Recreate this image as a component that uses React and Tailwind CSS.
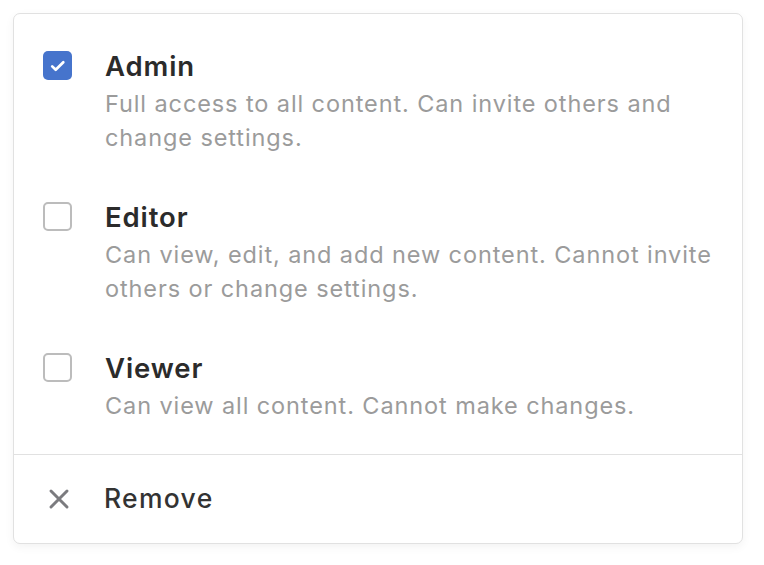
import React from "react";

const roles = [
  {
    name: "Admin",
    desc: "Full access to all content. Can invite others and change settings.",
    checked: true,
  },
  {
    name: "Editor",
    desc: "Can view, edit, and add new content. Cannot invite others or change settings.",
    checked: false,
  },
  {
    name: "Viewer",
    desc: "Can view all content. Cannot make changes.",
    checked: false,
  },
];

function Box({ checked }) {
  if (checked) {
    return (
      <div className="w-[29px] h-[29px] rounded-[5px] bg-[#4674cc] flex items-center justify-center shrink-0">
        <svg width="18" height="18" viewBox="0 0 18 18" fill="none">
          <path d="M3.2 9.4l3.5 3.4 7.6-7.6" stroke="white" strokeWidth="2.7" strokeLinecap="round" strokeLinejoin="round" />
        </svg>
      </div>
    );
  }
  return <div className="w-[29px] h-[29px] rounded-[5px] border-2 border-[#bcbcbc] bg-white shrink-0" />;
}

export default function App() {
  return (
    <div className="w-[764px] h-[565px] bg-white p-[13px]" style={{ fontFamily: "Inter, 'Noto Sans', sans-serif" }}>
      <div className="w-[730px] h-[531px] rounded-[7px] border-[1.5px] border-[#e1e1e1] bg-white shadow-[0_3px_10px_rgba(0,0,0,0.05)] flex flex-col">
        <div className="pt-[34px] pb-[31px] pl-[29px] pr-[20px] flex flex-col gap-[44px]">
          {roles.map((r) => (
            <div key={r.name} className="flex gap-[33px]">
              <div className="pt-[3px]">
                <Box checked={r.checked} />
              </div>
              <div className="flex flex-col">
                <div className="text-[27.5px] leading-[36px] font-semibold text-[#2b2b2b] tracking-[0.9px]">{r.name}</div>
                <div className="mt-[3px] text-[23.5px] leading-[34px] text-[#9b9b9b] tracking-[0.9px] max-w-[615px]">{r.desc}</div>
              </div>
            </div>
          ))}
        </div>
        <div className="border-t-[1.5px] border-[#e1e1e1] flex-1 flex items-center pl-[34px]">
          <svg width="22" height="22" viewBox="0 0 22 22" fill="none" className="shrink-0">
            <path d="M3 3l16 16M19 3L3 19" stroke="#7b7b7f" strokeWidth="3" strokeLinecap="round" />
          </svg>
          <span className="ml-[34px] text-[26.5px] font-medium text-[#333333] tracking-[1.3px]">Remove</span>
        </div>
      </div>
    </div>
  );
}
